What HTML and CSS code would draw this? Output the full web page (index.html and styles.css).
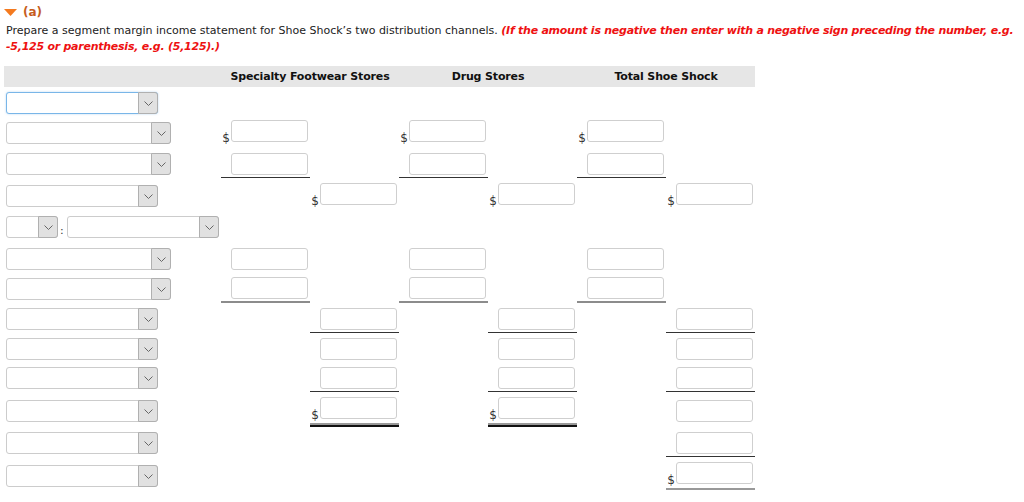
FILE: index.html
```html
<!DOCTYPE html>
<html lang="en">
<head>
<meta charset="utf-8">
<title>Segment margin income statement</title>
<link rel="stylesheet" href="styles.css">
</head>
<body>
<div class="page">
  <div class="part-title">
    <svg class="caret" width="13" height="7" viewBox="0 0 13 7"><polygon points="0,0 13,0 6.5,7" fill="#f47a1f"/></svg>
    <span class="part-label">(a)</span>
  </div>
  <p class="instructions">Prepare a segment margin income statement for Shoe Shock’s two distribution channels. <em class="note">(If the amount is negative then enter with a negative sign preceding the number, e.g.<br>-5,125 or parenthesis, e.g. (5,125).)</em></p>

  <div class="statement">
    <div class="row head">
      <div class="lbl"></div>
      <div class="hcell">Specialty Footwear Stores</div>
      <div class="hcell">Drug Stores</div>
      <div class="hcell">Total Shoe Shock</div>
    </div>

    <!-- r1 -->
    <div class="row h30">
      <div class="lbl"><span class="sel w152 focus"><span class="btn"><svg width="9" height="5" viewBox="0 0 9 5"><path d="M0.5 0.5 L4.5 4.5 L8.5 0.5" fill="none" stroke="#666" stroke-width="1"/></svg></span></span></div>
      <div class="c"></div><div class="c"></div><div class="c"></div><div class="c"></div><div class="c"></div><div class="c"></div>
    </div>

    <!-- r2 -->
    <div class="row h30">
      <div class="lbl"><span class="sel w165"><span class="btn"><svg width="9" height="5" viewBox="0 0 9 5"><path d="M0.5 0.5 L4.5 4.5 L8.5 0.5" fill="none" stroke="#666" stroke-width="1"/></svg></span></span></div>
      <div class="c dollar"><span class="cur">$</span><input type="text"></div><div class="c"></div>
      <div class="c dollar"><span class="cur">$</span><input type="text"></div><div class="c"></div>
      <div class="c dollar"><span class="cur">$</span><input type="text"></div><div class="c"></div>
    </div>

    <!-- r3 -->
    <div class="row h31">
      <div class="lbl"><span class="sel w165"><span class="btn"><svg width="9" height="5" viewBox="0 0 9 5"><path d="M0.5 0.5 L4.5 4.5 L8.5 0.5" fill="none" stroke="#666" stroke-width="1"/></svg></span></span></div>
      <div class="c u"><input type="text"></div><div class="c"></div>
      <div class="c u"><input type="text"></div><div class="c"></div>
      <div class="c u"><input type="text"></div><div class="c"></div>
    </div>

    <!-- r4 -->
    <div class="row h32">
      <div class="lbl"><span class="sel w152"><span class="btn"><svg width="9" height="5" viewBox="0 0 9 5"><path d="M0.5 0.5 L4.5 4.5 L8.5 0.5" fill="none" stroke="#666" stroke-width="1"/></svg></span></span></div>
      <div class="c"></div><div class="c dollar"><span class="cur">$</span><input type="text"></div>
      <div class="c"></div><div class="c dollar"><span class="cur">$</span><input type="text"></div>
      <div class="c"></div><div class="c dollar"><span class="cur">$</span><input type="text"></div>
    </div>

    <!-- r5 -->
    <div class="row h31">
      <div class="lbl"><span class="sel w52"><span class="btn"><svg width="9" height="5" viewBox="0 0 9 5"><path d="M0.5 0.5 L4.5 4.5 L8.5 0.5" fill="none" stroke="#666" stroke-width="1"/></svg></span></span><span class="colon">:</span><span class="sel w152"><span class="btn"><svg width="9" height="5" viewBox="0 0 9 5"><path d="M0.5 0.5 L4.5 4.5 L8.5 0.5" fill="none" stroke="#666" stroke-width="1"/></svg></span></span></div>
      <div class="c"></div><div class="c"></div><div class="c"></div><div class="c"></div><div class="c"></div><div class="c"></div>
    </div>

    <!-- r6 -->
    <div class="row h32">
      <div class="lbl"><span class="sel w165"><span class="btn"><svg width="9" height="5" viewBox="0 0 9 5"><path d="M0.5 0.5 L4.5 4.5 L8.5 0.5" fill="none" stroke="#666" stroke-width="1"/></svg></span></span></div>
      <div class="c"><input type="text"></div><div class="c"></div>
      <div class="c"><input type="text"></div><div class="c"></div>
      <div class="c"><input type="text"></div><div class="c"></div>
    </div>

    <!-- r7 -->
    <div class="row h30">
      <div class="lbl"><span class="sel w165"><span class="btn"><svg width="9" height="5" viewBox="0 0 9 5"><path d="M0.5 0.5 L4.5 4.5 L8.5 0.5" fill="none" stroke="#666" stroke-width="1"/></svg></span></span></div>
      <div class="c ug"><input type="text"></div><div class="c"></div>
      <div class="c ug"><input type="text"></div><div class="c"></div>
      <div class="c ug"><input type="text"></div><div class="c"></div>
    </div>

    <!-- r8 -->
    <div class="row h30">
      <div class="lbl"><span class="sel w152"><span class="btn"><svg width="9" height="5" viewBox="0 0 9 5"><path d="M0.5 0.5 L4.5 4.5 L8.5 0.5" fill="none" stroke="#666" stroke-width="1"/></svg></span></span></div>
      <div class="c"></div><div class="c u"><input type="text"></div>
      <div class="c"></div><div class="c u"><input type="text"></div>
      <div class="c"></div><div class="c u"><input type="text"></div>
    </div>

    <!-- r9 -->
    <div class="row h30">
      <div class="lbl"><span class="sel w152"><span class="btn"><svg width="9" height="5" viewBox="0 0 9 5"><path d="M0.5 0.5 L4.5 4.5 L8.5 0.5" fill="none" stroke="#666" stroke-width="1"/></svg></span></span></div>
      <div class="c"></div><div class="c"><input type="text"></div>
      <div class="c"></div><div class="c"><input type="text"></div>
      <div class="c"></div><div class="c"><input type="text"></div>
    </div>

    <!-- r10 -->
    <div class="row h29">
      <div class="lbl"><span class="sel w152"><span class="btn"><svg width="9" height="5" viewBox="0 0 9 5"><path d="M0.5 0.5 L4.5 4.5 L8.5 0.5" fill="none" stroke="#666" stroke-width="1"/></svg></span></span></div>
      <div class="c"></div><div class="c u"><input type="text"></div>
      <div class="c"></div><div class="c u"><input type="text"></div>
      <div class="c"></div><div class="c u"><input type="text"></div>
    </div>

    <!-- r11 -->
    <div class="row h33">
      <div class="lbl"><span class="sel w152"><span class="btn"><svg width="9" height="5" viewBox="0 0 9 5"><path d="M0.5 0.5 L4.5 4.5 L8.5 0.5" fill="none" stroke="#666" stroke-width="1"/></svg></span></span></div>
      <div class="c"></div><div class="c dollar dbl"><span class="cur">$</span><input type="text"></div>
      <div class="c"></div><div class="c dollar dbl"><span class="cur">$</span><input type="text"></div>
      <div class="c"></div><div class="c"><input type="text"></div>
    </div>

    <!-- r12 -->
    <div class="row h32">
      <div class="lbl"><span class="sel w152"><span class="btn"><svg width="9" height="5" viewBox="0 0 9 5"><path d="M0.5 0.5 L4.5 4.5 L8.5 0.5" fill="none" stroke="#666" stroke-width="1"/></svg></span></span></div>
      <div class="c"></div><div class="c"></div>
      <div class="c"></div><div class="c"></div>
      <div class="c"></div><div class="c u"><input type="text"></div>
    </div>

    <!-- r13 -->
    <div class="row h33">
      <div class="lbl"><span class="sel w152"><span class="btn"><svg width="9" height="5" viewBox="0 0 9 5"><path d="M0.5 0.5 L4.5 4.5 L8.5 0.5" fill="none" stroke="#666" stroke-width="1"/></svg></span></span></div>
      <div class="c"></div><div class="c"></div>
      <div class="c"></div><div class="c"></div>
      <div class="c"></div><div class="c dollar dbl"><span class="cur">$</span><input type="text"></div>
    </div>
  </div>
</div>
</body>
</html>
```

FILE: styles.css
```css
* { box-sizing: border-box; }

body {
  margin: 0;
  background: #fff;
  color: #222;
  font-family: "DejaVu Sans", "Liberation Sans", sans-serif;
  font-size: 11px;
}

.page {
  padding: 3px 0 0 4px;
}

.part-title {
  display: flex;
  align-items: center;
  height: 18px;
  gap: 6px;
}

.caret {
  display: block;
  margin-top: 1px;
}

.part-label {
  color: #c65d1e;
  font-weight: bold;
  font-size: 12px;
}

.instructions {
  margin: 2px 0 0 2px;
  line-height: 16px;
  white-space: nowrap;
}

.note {
  color: #ee1111;
  font-weight: bold;
  font-style: italic;
  letter-spacing: -0.25px;
}

.statement {
  margin-top: 11px;
  width: 751px;
}

.row {
  display: grid;
  grid-template-columns: 217px repeat(6, 89px);
}

.head {
  height: 21px;
  background: #e6e6e6;
  grid-template-columns: 217px repeat(3, 178px);
  align-items: center;
}

.hcell {
  text-align: center;
  font-weight: bold;
  color: #111;
  letter-spacing: -0.15px;
}

.h29 { height: 29px; }
.h30 { height: 30px; }
.h31 { height: 31px; }
.h32 { height: 32px; }
.h33 { height: 33px; }

.lbl {
  display: flex;
  align-items: flex-end;
  padding: 0 0 3px 2px;
}

.c {
  display: flex;
  align-items: flex-end;
  justify-content: flex-end;
  padding: 0 2px 2px 0;
  border-bottom: 1px solid transparent;
}

.c.u { border-bottom-color: #333; }

.c.ug { border-bottom: 2px solid #8c8c8c; }

.c.dbl {
  border-bottom: 2px solid #999;
  box-shadow: 0 2px 0 0 #111;
}

.c input {
  display: block;
  width: 77px;
  height: 22px;
  margin: 0;
  padding: 2px 4px;
  border: 1px solid #cfcfcf;
  border-radius: 3px;
  background: #fff;
  font: inherit;
}

.dollar input { margin-bottom: 2px; }

.cur {
  display: block;
  font-size: 12px;
  line-height: 12px;
  margin: 0 1px 0 0;
  color: #333;
}

.sel {
  display: flex;
  justify-content: flex-end;
  height: 22px;
  border: 1px solid #cccccc;
  border-radius: 3px;
  background: #fff;
}

.sel.focus {
  border-color: #79b6e8;
  box-shadow: 0 0 2px rgba(102, 170, 230, 0.5);
}

.w152 { width: 152px; }
.w165 { width: 165px; }
.w52 { width: 52px; }

.btn {
  display: flex;
  align-items: center;
  justify-content: center;
  width: 20px;
  margin: -1px -1px -1px 0;
  border: 1px solid #b0b0b0;
  border-radius: 0 3px 3px 0;
  background: #e1e1e1;
}

.btn svg { display: block; }

.colon {
  width: 9px;
  padding-left: 2px;
  line-height: 11px;
  margin-bottom: 2px;
  color: #333;
}
```
